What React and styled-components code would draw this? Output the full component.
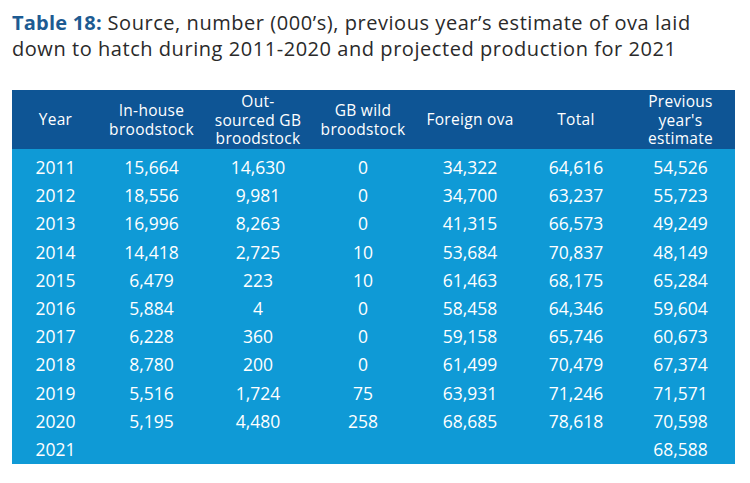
import React from "react";
import styled, { createGlobalStyle } from "styled-components";

const GlobalStyle = createGlobalStyle`
  html, body { margin: 0; padding: 0; background: #ffffff; }
  body { font-family: "Open Sans", "Noto Sans", sans-serif; }
`;

const Page = styled.div`
  width: 750px;
  height: 483px;
  box-sizing: border-box;
  padding: 10px 15px 0 12px;
  background: #ffffff;
`;

const Title = styled.h1`
  margin: 0;
  font-size: 20px;
  line-height: 26px;
  font-weight: 400;
  color: #2a2a2a;
  letter-spacing: 0.55px;
  white-space: nowrap;
`;

const Label = styled.span`
  font-weight: 700;
  color: #1d5b92;
  letter-spacing: 0.2px;
`;

const Table = styled.div`
  margin-top: 28px;
  width: 723px;
  display: grid;
  grid-template-columns: 87px 105px 108px 102px 112px 100px 109px;
`;

const HeadCell = styled.div`
  background: #0e5595;
  color: #ffffff;
  font-size: 15.5px;
  line-height: 18.5px;
  letter-spacing: 0.3px;
  height: 59px;
  display: flex;
  align-items: center;
  justify-content: center;
  text-align: center;
  padding-top: ${(p) => (p.$tall ? "1px" : "0")};
  box-sizing: border-box;
  white-space: nowrap;
`;

const Body = styled.div`
  grid-column: 1 / -1;
  display: grid;
  grid-template-columns: subgrid;
  background: #0f9ad6;
  padding: 4px 0 1px;
`;

const Cell = styled.div`
  color: #ffffff;
  font-size: 17.5px;
  height: 28.2px;
  display: flex;
  align-items: center;
  justify-content: center;
`;

const headers = [
  ["Year"],
  ["In-house", "broodstock"],
  ["Out-", "sourced GB", "broodstock"],
  ["GB wild", "broodstock"],
  ["Foreign ova"],
  ["Total"],
  ["Previous", "year's", "estimate"],
];

const rows = [
  ["2011", "15,664", "14,630", "0", "34,322", "64,616", "54,526"],
  ["2012", "18,556", "9,981", "0", "34,700", "63,237", "55,723"],
  ["2013", "16,996", "8,263", "0", "41,315", "66,573", "49,249"],
  ["2014", "14,418", "2,725", "10", "53,684", "70,837", "48,149"],
  ["2015", "6,479", "223", "10", "61,463", "68,175", "65,284"],
  ["2016", "5,884", "4", "0", "58,458", "64,346", "59,604"],
  ["2017", "6,228", "360", "0", "59,158", "65,746", "60,673"],
  ["2018", "8,780", "200", "0", "61,499", "70,479", "67,374"],
  ["2019", "5,516", "1,724", "75", "63,931", "71,246", "71,571"],
  ["2020", "5,195", "4,480", "258", "68,685", "78,618", "70,598"],
  ["2021", "", "", "", "", "", "68,588"],
];

export default function App() {
  return (
    <>
      <GlobalStyle />
      <Page>
        <Title>
          <Label>Table 18:</Label> Source, number (000’s), previous year’s estimate of ova laid
          <br />
          down to hatch during 2011-2020 and projected production for 2021
        </Title>
        <Table>
          {headers.map((lines, i) => (
            <HeadCell key={i} $tall={lines.length === 3}>
              <div>
                {lines.map((l, j) => (
                  <div key={j}>{l}</div>
                ))}
              </div>
            </HeadCell>
          ))}
          <Body>
            {rows.map((r, i) =>
              r.map((v, j) => <Cell key={`${i}-${j}`}>{v}</Cell>)
            )}
          </Body>
        </Table>
      </Page>
    </>
  );
}
